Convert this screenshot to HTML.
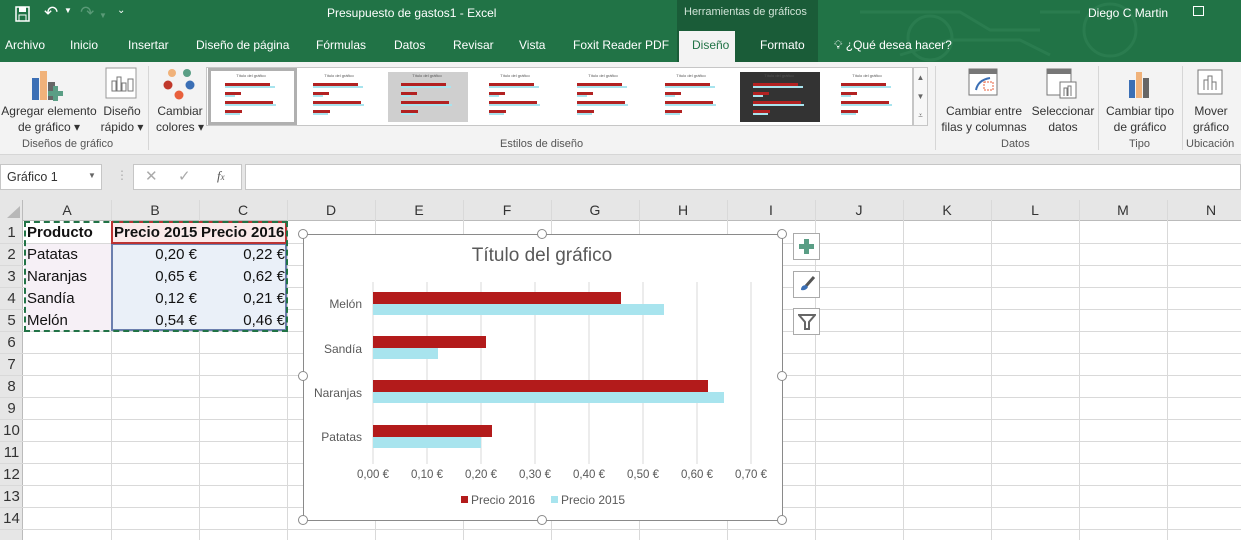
<!DOCTYPE html>
<html><head><meta charset="utf-8"><style>
*{margin:0;padding:0;box-sizing:border-box}
body{width:1241px;height:540px;overflow:hidden;position:relative;background:#fff;font-family:"Liberation Sans",sans-serif;font-size:12px;color:#222}
.a{position:absolute}
.t{position:absolute;white-space:nowrap}
.green{background:#217346}
.tab{position:absolute;top:38px;color:#fff;font-size:12px}
.rl{position:absolute;font-size:12px;color:#333;text-align:center;line-height:16px;white-space:nowrap}
.gl{position:absolute;font-size:11px;color:#555}
.hl{position:absolute;left:0;width:1241px;height:1px;background:#d9d9d9}
.vl{position:absolute;top:200px;width:1px;height:340px;background:#d9d9d9}
.ch{position:absolute;top:200px;height:21px;line-height:21px;text-align:center;font-size:14px;color:#333}
.rh{position:absolute;left:0;width:23px;text-align:center;font-size:15px;color:#333;height:22px;line-height:22px}
.cell{position:absolute;font-size:15px;height:22px;line-height:22px;color:#111}
.h{position:absolute;width:10px;height:10px;border:1.5px solid #8a8a8a;border-radius:50%;background:#fff}
</style></head><body>
<div class="a green" style="left:0;top:0;width:1241px;height:62px"></div>
<div class="a" style="left:677px;top:0;width:141px;height:62px;background:#1a5c38"></div>
<svg class="a" style="left:840px;top:0" width="300" height="62"><g fill="none" stroke="#2a7c4f" stroke-width="3"><circle cx="90" cy="38" r="22"/><path d="M20 12 H120 L150 30 H200"/><path d="M60 55 L110 40 H180 L210 55"/><circle cx="270" cy="30" r="26"/><path d="M200 12 H240"/></g></svg>
<svg class="a" style="left:14px;top:5px" width="18" height="18"><rect x="2" y="2" width="13" height="14" fill="none" stroke="#fff" stroke-width="1.5"/><rect x="5" y="2" width="7" height="5" fill="#fff"/><rect x="5" y="10" width="7" height="6" fill="none" stroke="#fff"/></svg>
<div class="t" style="left:44px;top:3px;color:#fff;font-size:17px">↶</div>
<div class="t" style="left:64px;top:6px;color:#fff;font-size:8px">▼</div>
<div class="t" style="left:80px;top:3px;color:#5a9a77;font-size:17px">↷ <span style="font-size:8px">▼</span></div>
<div class="t" style="left:117px;top:5px;color:#fff;font-size:10px">⌄</div>
<div class="t" style="left:327px;top:6px;color:#fff;font-size:12px">Presupuesto de gastos1 - Excel</div>
<div class="t" style="left:684px;top:6px;color:#cfe3d6;font-size:11px">Herramientas de gráficos</div>
<div class="t" style="left:1088px;top:6px;color:#fff;font-size:12px">Diego C Martin</div>
<div class="a" style="left:1193px;top:6px;width:11px;height:10px;border:1px solid #fff"></div>
<div class="tab" style="left:5px">Archivo</div>
<div class="tab" style="left:70px">Inicio</div>
<div class="tab" style="left:128px">Insertar</div>
<div class="tab" style="left:196px">Diseño de página</div>
<div class="tab" style="left:316px">Fórmulas</div>
<div class="tab" style="left:394px">Datos</div>
<div class="tab" style="left:453px">Revisar</div>
<div class="tab" style="left:519px">Vista</div>
<div class="tab" style="left:573px">Foxit Reader PDF</div>
<div class="a" style="left:679px;top:31px;width:56px;height:32px;background:#f3f3f3"></div>
<div class="tab" style="left:692px;color:#217346">Diseño</div>
<div class="tab" style="left:760px">Formato</div>
<div class="tab" style="left:834px">💡︎ ¿Qué desea hacer?</div>
<div class="a" style="left:0;top:62px;width:1241px;height:93px;background:#f3f3f3;border-bottom:1px solid #d6d6d6"></div>
<svg class="a" style="left:30px;top:70px" width="40" height="32"><rect x="2" y="8" width="7" height="22" fill="#3b6fb5"/><rect x="10" y="1" width="7" height="29" fill="#f0b27a"/><rect x="18" y="12" width="7" height="18" fill="#666"/><path d="M23 16h5v5h5v5h-5v5h-5v-5h-5v-5h5z" fill="#5a9e85"/></svg>
<div class="rl" style="left:0;top:103px;width:98px">Agregar elemento<br>de gráfico ▾</div>
<svg class="a" style="left:105px;top:67px" width="34" height="34"><rect x="1" y="1" width="30" height="30" fill="#fff" stroke="#999"/><rect x="7" y="14" width="4" height="10" fill="none" stroke="#777"/><rect x="12" y="10" width="4" height="14" fill="none" stroke="#777"/><rect x="17" y="16" width="4" height="8" fill="none" stroke="#777"/><rect x="23" y="12" width="5" height="12" fill="none" stroke="#777"/></svg>
<div class="rl" style="left:98px;top:103px;width:48px">Diseño<br>rápido ▾</div>
<div class="gl" style="left:22px;top:138px">Diseños de gráfico</div>
<div class="a" style="left:148px;top:66px;width:1px;height:84px;background:#d6d6d6"></div>
<svg class="a" style="left:162px;top:67px" width="36" height="34"><circle cx="10" cy="6" r="4" fill="#f0b27a"/><circle cx="25" cy="6" r="4" fill="#5a9e85"/><circle cx="6" cy="18" r="4.5" fill="#c0392b"/><circle cx="28" cy="18" r="4.5" fill="#3b6fb5"/><circle cx="17" cy="28" r="4.5" fill="#e8603c"/></svg>
<div class="rl" style="left:152px;top:103px;width:56px">Cambiar<br>colores ▾</div>
<div class="a" style="left:206px;top:67px;width:707px;height:59px;background:#fff;border:1px solid #c6c6c6"></div>
<div class="a" style="left:913px;top:67px;width:15px;height:59px;background:#f7f7f7;border:1px solid #c6c6c6;font-size:8px;color:#666;text-align:center;line-height:19px">▲<br>▼<br>⩡</div>
<div class="a" style="left:208px;top:68px;width:89px;height:57px;border:3px solid #b0b0b0"></div>
<svg class="a" style="left:211px;top:71px" width="700" height="52">
<g id="g1"><text x="40" y="6" font-size="4" fill="#555" text-anchor="middle">Título del gráfico</text>
<rect x="14" y="12" width="45" height="3" fill="#b22222"/><rect x="14" y="15" width="50" height="2" fill="#a8e4ee"/>
<rect x="14" y="21" width="16" height="3" fill="#b22222"/><rect x="14" y="24" width="10" height="2" fill="#a8e4ee"/>
<rect x="14" y="30" width="48" height="3" fill="#b22222"/><rect x="14" y="33" width="51" height="2" fill="#a8e4ee"/>
<rect x="14" y="39" width="17" height="3" fill="#b22222"/><rect x="14" y="42" width="15" height="2" fill="#a8e4ee"/></g>
<use href="#g1" x="88"/>
<rect x="177" y="1" width="80" height="50" fill="#cfcfcf"/><use href="#g1" x="176"/>
<use href="#g1" x="264"/><use href="#g1" x="352"/><use href="#g1" x="440"/>
<rect x="529" y="1" width="80" height="50" fill="#333"/><use href="#g1" x="528"/>
<use href="#g1" x="616"/>
</svg>
<div class="gl" style="left:500px;top:138px">Estilos de diseño</div>
<div class="a" style="left:935px;top:66px;width:1px;height:84px;background:#d6d6d6"></div>
<svg class="a" style="left:968px;top:68px" width="32" height="30"><rect x="1" y="1" width="28" height="26" fill="#fff" stroke="#777"/><rect x="1" y="1" width="28" height="5" fill="#777"/><path d="M8 22 q2-10 14-12" stroke="#3b6fb5" stroke-width="2" fill="none"/><rect x="16" y="14" width="9" height="8" fill="none" stroke="#e8603c" stroke-dasharray="2 1"/></svg>
<div class="rl" style="left:940px;top:103px;width:88px">Cambiar entre<br>filas y columnas</div>
<svg class="a" style="left:1046px;top:68px" width="32" height="32"><rect x="1" y="1" width="24" height="26" fill="#fff" stroke="#777"/><rect x="1" y="1" width="24" height="5" fill="#777"/><rect x="14" y="14" width="16" height="16" fill="#fff" stroke="#777"/><path d="M18 28v-8h3v8M22 28v-10h3v10" stroke="#777" fill="none"/></svg>
<div class="rl" style="left:1030px;top:103px;width:66px">Seleccionar<br>datos</div>
<div class="gl" style="left:1001px;top:138px">Datos</div>
<div class="a" style="left:1098px;top:66px;width:1px;height:84px;background:#d6d6d6"></div>
<svg class="a" style="left:1125px;top:70px" width="30" height="30"><rect x="4" y="10" width="6" height="18" fill="#3b6fb5"/><rect x="11" y="2" width="6" height="26" fill="#f0b27a"/><rect x="18" y="8" width="6" height="20" fill="#666"/></svg>
<div class="rl" style="left:1100px;top:103px;width:80px">Cambiar tipo<br>de gráfico</div>
<div class="gl" style="left:1129px;top:138px">Tipo</div>
<div class="a" style="left:1182px;top:66px;width:1px;height:84px;background:#d6d6d6"></div>
<svg class="a" style="left:1196px;top:68px" width="30" height="32"><rect x="2" y="2" width="24" height="24" fill="#fff" stroke="#777"/><path d="M8 22v-10h4v10M12 22v-14h4v14M16 22v-8h4v8" stroke="#777" fill="none"/></svg>
<div class="rl" style="left:1186px;top:103px;width:50px">Mover<br>gráfico</div>
<div class="gl" style="left:1186px;top:138px">Ubicación</div>
<div class="a" style="left:0;top:155px;width:1241px;height:45px;background:#e6e6e6"></div>
<div class="a" style="left:0;top:164px;width:102px;height:26px;background:#fff;border:1px solid #c6c6c6"></div>
<div class="t" style="left:7px;top:170px;font-size:12.5px;color:#333">Gráfico 1</div>
<div class="t" style="left:88px;top:171px;font-size:8px;color:#666">▼</div>
<div class="t" style="left:116px;top:168px;color:#aaa">⋮</div>
<div class="a" style="left:133px;top:164px;width:109px;height:26px;background:#fff;border:1px solid #c6c6c6"></div>
<div class="t" style="left:145px;top:167px;color:#aaa;font-size:15px">✕</div>
<div class="t" style="left:178px;top:167px;color:#aaa;font-size:15px">✓</div>
<div class="t" style="left:217px;top:168px;color:#555;font-size:13px;font-style:italic;font-family:'Liberation Serif',serif">f<span style="font-size:9px">x</span></div>
<div class="a" style="left:245px;top:164px;width:996px;height:26px;background:#fff;border:1px solid #c6c6c6"></div>
<div class="a" style="left:0;top:200px;width:1241px;height:21px;background:#e6e6e6;border-bottom:1px solid #bbb"></div>
<div class="a" style="left:0;top:200px;width:23px;height:340px;background:#e6e6e6;border-right:1px solid #bbb"></div>
<svg class="a" style="left:6px;top:205px" width="15" height="14"><path d="M14 1V13H1Z" fill="#b8b8b8"/></svg>
<div class="vl" style="left:111px"></div><div class="vl" style="left:199px"></div><div class="vl" style="left:287px"></div><div class="vl" style="left:375px"></div><div class="vl" style="left:463px"></div><div class="vl" style="left:551px"></div><div class="vl" style="left:639px"></div><div class="vl" style="left:727px"></div><div class="vl" style="left:815px"></div><div class="vl" style="left:903px"></div><div class="vl" style="left:991px"></div><div class="vl" style="left:1079px"></div><div class="vl" style="left:1167px"></div>
<div class="hl" style="top:243px"></div><div class="hl" style="top:265px"></div><div class="hl" style="top:287px"></div><div class="hl" style="top:309px"></div><div class="hl" style="top:331px"></div><div class="hl" style="top:353px"></div><div class="hl" style="top:375px"></div><div class="hl" style="top:397px"></div><div class="hl" style="top:419px"></div><div class="hl" style="top:441px"></div><div class="hl" style="top:463px"></div><div class="hl" style="top:485px"></div><div class="hl" style="top:507px"></div><div class="hl" style="top:529px"></div>
<div class="ch" style="left:23px;width:88px">A</div><div class="ch" style="left:111px;width:88px">B</div><div class="ch" style="left:199px;width:88px">C</div><div class="ch" style="left:287px;width:88px">D</div><div class="ch" style="left:375px;width:88px">E</div><div class="ch" style="left:463px;width:88px">F</div><div class="ch" style="left:551px;width:88px">G</div><div class="ch" style="left:639px;width:88px">H</div><div class="ch" style="left:727px;width:88px">I</div><div class="ch" style="left:815px;width:88px">J</div><div class="ch" style="left:903px;width:88px">K</div><div class="ch" style="left:991px;width:88px">L</div><div class="ch" style="left:1079px;width:88px">M</div><div class="ch" style="left:1167px;width:88px">N</div>
<div class="rh" style="top:222px">1</div><div class="rh" style="top:244px">2</div><div class="rh" style="top:266px">3</div><div class="rh" style="top:288px">4</div><div class="rh" style="top:310px">5</div><div class="rh" style="top:332px">6</div><div class="rh" style="top:354px">7</div><div class="rh" style="top:376px">8</div><div class="rh" style="top:398px">9</div><div class="rh" style="top:420px">10</div><div class="rh" style="top:442px">11</div><div class="rh" style="top:464px">12</div><div class="rh" style="top:486px">13</div><div class="rh" style="top:508px">14</div>
<div class="a" style="left:25px;top:244px;width:86px;height:87px;background:#f6f0f6"></div>
<div class="a" style="left:112px;top:222px;width:175px;height:21px;background:#fbeaea"></div>
<div class="a" style="left:112px;top:244px;width:175px;height:87px;background:#eaf0f8"></div>
<div class="a" style="left:111px;top:243px;width:176px;height:88px;border:2px solid #6b7fae"></div>
<div class="a" style="left:111px;top:221px;width:176px;height:23px;border:2px solid #b33"></div>
<div class="a" style="left:24px;top:221px;width:264px;height:111px;border:2px dashed #217346"></div>
<div class="cell" style="left:27px;top:222px;font-weight:bold">Producto</div>
<div class="cell" style="left:114px;top:222px;font-weight:bold">Precio 2015</div>
<div class="cell" style="left:201px;top:222px;font-weight:bold">Precio 2016</div>
<div class="cell" style="left:27px;top:244px">Patatas</div><div class="cell" style="left:27px;top:266px">Naranjas</div><div class="cell" style="left:27px;top:288px">Sandía</div><div class="cell" style="left:27px;top:310px">Melón</div>
<div class="cell" style="left:111px;top:244px;width:86px;text-align:right">0,20 €</div><div class="cell" style="left:111px;top:266px;width:86px;text-align:right">0,65 €</div><div class="cell" style="left:111px;top:288px;width:86px;text-align:right">0,12 €</div><div class="cell" style="left:111px;top:310px;width:86px;text-align:right">0,54 €</div>
<div class="cell" style="left:199px;top:244px;width:86px;text-align:right">0,22 €</div><div class="cell" style="left:199px;top:266px;width:86px;text-align:right">0,62 €</div><div class="cell" style="left:199px;top:288px;width:86px;text-align:right">0,21 €</div><div class="cell" style="left:199px;top:310px;width:86px;text-align:right">0,46 €</div>
<div class="a" style="left:303px;top:234px;width:480px;height:287px;background:#fff;border:1px solid #8a8a8a"></div>
<svg class="a" style="left:303px;top:234px" width="480" height="287" font-family="Liberation Sans, sans-serif">
<text x="239" y="27" font-size="19" fill="#595959" text-anchor="middle">Título del gráfico</text>
<g stroke="#d9d9d9"><path d="M70 48V230M124 48V230M178 48V230M232 48V230M286 48V230M340 48V230M394 48V230M448 48V230"/></g>
<g fill="#b31b1b"><rect x="70" y="58" width="248" height="12"/><rect x="70" y="102" width="113" height="12"/><rect x="70" y="146" width="335" height="12"/><rect x="70" y="191" width="119" height="12"/></g>
<g fill="#a8e4ee"><rect x="70" y="70" width="291" height="11"/><rect x="70" y="114" width="65" height="11"/><rect x="70" y="158" width="351" height="11"/><rect x="70" y="203" width="108" height="11"/></g>
<g font-size="12" fill="#595959" text-anchor="end"><text x="59" y="74">Melón</text><text x="59" y="119">Sandía</text><text x="59" y="163">Naranjas</text><text x="59" y="207">Patatas</text></g>
<g font-size="11.5" fill="#595959" text-anchor="middle"><text x="70" y="244">0,00 €</text><text x="124" y="244">0,10 €</text><text x="178" y="244">0,20 €</text><text x="232" y="244">0,30 €</text><text x="286" y="244">0,40 €</text><text x="340" y="244">0,50 €</text><text x="394" y="244">0,60 €</text><text x="448" y="244">0,70 €</text></g>
<rect x="158" y="262" width="7" height="7" fill="#b31b1b"/><text x="168" y="270" font-size="12" fill="#595959">Precio 2016</text>
<rect x="248" y="262" width="7" height="7" fill="#a8e4ee"/><text x="258" y="270" font-size="12" fill="#595959">Precio 2015</text>
</svg>
<div class="h" style="left:298px;top:229px"></div><div class="h" style="left:537px;top:229px"></div><div class="h" style="left:777px;top:229px"></div>
<div class="h" style="left:298px;top:371px"></div><div class="h" style="left:777px;top:371px"></div>
<div class="h" style="left:298px;top:515px"></div><div class="h" style="left:537px;top:515px"></div><div class="h" style="left:777px;top:515px"></div>
<div class="a" style="left:793px;top:233px;width:27px;height:27px;background:#fff;border:1px solid #aaa"></div>
<svg class="a" style="left:799px;top:239px" width="16" height="16"><path d="M5 0h5v5h5v5h-5v5h-5v-5h-5v-5h5z" fill="#5a9e85"/></svg>
<div class="a" style="left:793px;top:271px;width:27px;height:27px;background:#fff;border:1px solid #aaa"></div>
<svg class="a" style="left:798px;top:275px" width="18" height="18"><path d="M16 2 L8 11" stroke="#555" stroke-width="3"/><path d="M3 15 q0-5 5-5 l2 2 q-2 4-7 3z" fill="#3b6fb5"/></svg>
<div class="a" style="left:793px;top:308px;width:27px;height:27px;background:#fff;border:1px solid #aaa"></div>
<svg class="a" style="left:798px;top:313px" width="18" height="18"><path d="M1 2H17L11 9V16H7V9Z" fill="none" stroke="#666" stroke-width="2"/></svg>
</body></html>
